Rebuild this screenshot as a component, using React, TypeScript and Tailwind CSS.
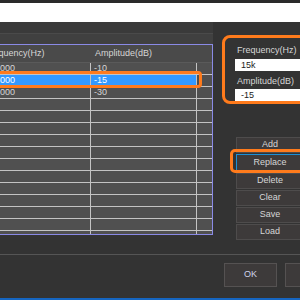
import React from 'react';

const rows = [
  { freq: '10000', amp: '-10' },
  { freq: '15000', amp: '-15', selected: true },
  { freq: '20000', amp: '-30' },
];

const buttons = ['Add', 'Replace', 'Delete', 'Clear', 'Save', 'Load'];

export default function App() {
  const filler = Array.from({ length: 12 });

  return (
    <div
      className="relative w-[300px] h-[300px] overflow-hidden bg-[#333333] text-[9px] text-[#d6d6d6]"
      style={{ fontFamily: '"Liberation Sans", Arial, sans-serif' }}
    >
      {/* title strip + white bar */}
      <div className="h-[3px] bg-[#2a2a2a]" />
      <div className="h-[19px] bg-white" />

      <div className="flex">
        {/* left: table area */}
        <div className="w-[213px] shrink-0">
          <div className="h-[11px] bg-[#3a3a3a]" />
          <div className="h-[11px] bg-[#404040] border-t border-[#4a4a4a]" />
          <div className="ml-[-24px] h-[191px] overflow-hidden border border-[#8a8ae6] bg-[#505050]">
            {/* header */}
            <div className="flex h-[18px] bg-[#4a4a4a] items-center border-b border-[#5a5a5a]">
              <div className="w-[114px] pl-[8px]">Frequency(Hz)</div>
              <div className="w-[106px] pl-[4px]">Amplitude(dB)</div>
            </div>
            {rows.map((r) => (
              <div
                key={r.freq}
                className={`flex h-[12px] items-center border-b border-[#c4c4c4] ${r.selected ? 'text-white' : ''}`}
              >
                <div className={`w-[114px] h-full flex items-center pl-[13px] border-r border-[#c4c4c4] ${r.selected ? 'bg-[#3399ff]' : ''}`}>
                  {r.freq}
                </div>
                <div className={`w-[106px] h-full flex items-center pl-[3px] border-r border-[#c4c4c4] ${r.selected ? 'bg-[#3399ff]' : ''}`}>
                  {r.amp}
                </div>
                <div className="flex-1 h-full" />
              </div>
            ))}
            {filler.map((_, i) => (
              <div key={i} className="flex h-[12px] border-b border-[#c4c4c4]">
                <div className="w-[114px] h-full border-r border-[#c4c4c4]" />
                <div className="w-[106px] h-full border-r border-[#c4c4c4]" />
                <div className="flex-1" />
              </div>
            ))}
          </div>
        </div>

        {/* right: edit group + buttons */}
        <div className="flex-1 pl-[22px] pt-[21px]">
          <div className="flex flex-col">
            <div className="pl-[2px] h-[15px] leading-[15px]">Frequency(Hz)</div>
            <div className="w-[80px] h-[12px] bg-white text-[#222] pl-[6px] leading-[12px] mt-[1px]">15k</div>
            <div className="pl-[2px] h-[17px] leading-[20px]">Amplitude(dB)</div>
            <div className="w-[80px] h-[13px] bg-white text-[#222] pl-[6px] leading-[13px] mt-[1px]">-15</div>
          </div>

          <div className="flex flex-col gap-[1px] mt-[35px] ml-[1px]">
            {buttons.map((b) => (
              <div
                key={b}
                className={`w-[80px] h-[16px] flex items-center justify-center bg-[#3d3a3a] border ${b === 'Replace' ? 'border-[#1b8fd6] h-[18px]' : 'border-[#4e4c4c]'}`}
              >
                <span className="pr-[12px]">{b}</span>
              </div>
            ))}
          </div>
        </div>
      </div>

      {/* footer */}
      <div className="mt-[14px] border-t border-[#555555]" />
      <div className="flex gap-[8px] pl-[224px] pt-[8px]">
        <div className="w-[53px] h-[24px] shrink-0 flex items-center justify-center bg-[#3d3a3a] border border-[#555252] text-[#cfd3ea]">
          OK
        </div>
        <div className="w-[53px] h-[24px] shrink-0 bg-[#3d3a3a] border border-[#555252]" />
      </div>
      <div className="absolute left-0 right-0 bottom-0 h-[2px] bg-[#1565c0]" />

      {/* orange annotations */}
      <div className="absolute left-[-10px] top-[71px] w-[212px] h-[17px] rounded-[4px] border-[3px] border-[#ff7b1c]" />
      <div className="absolute left-[222px] top-[35px] w-[100px] h-[69px] rounded-[8px] border-[3px] border-[#ff7b1c]" />
      <div className="absolute left-[230px] top-[149px] w-[90px] h-[24px] rounded-[5px] border-[3px] border-[#ff7b1c]" />
    </div>
  );
}
